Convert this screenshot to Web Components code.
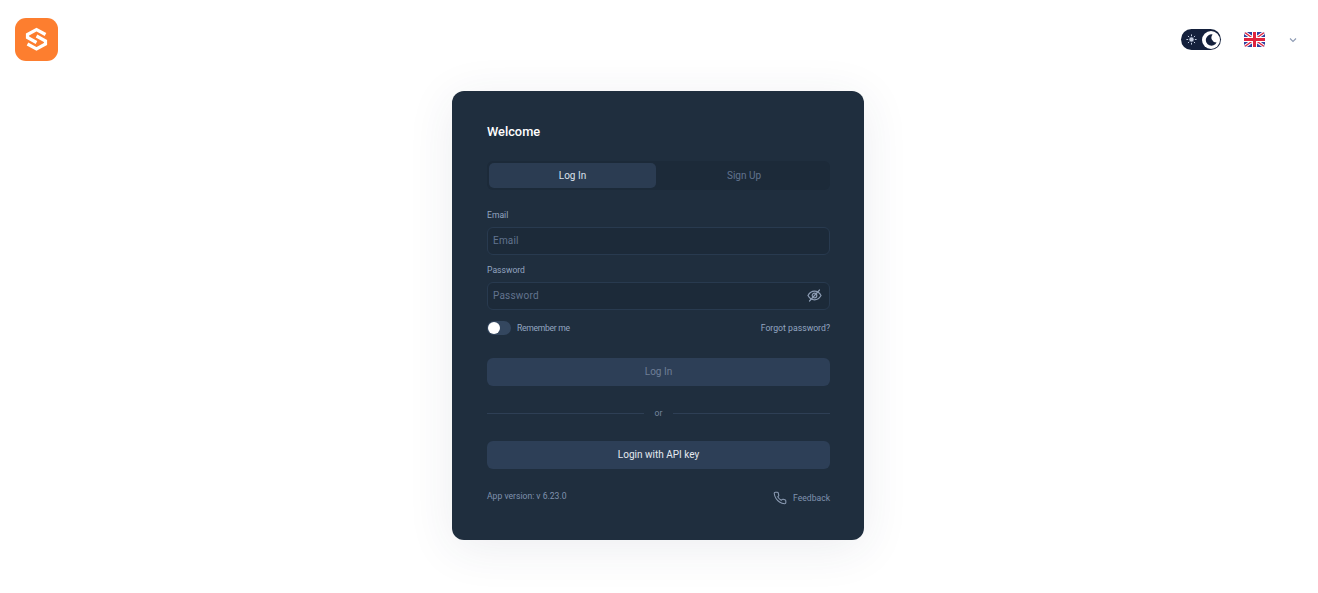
<!DOCTYPE html>
<html lang="en">
<head>
<meta charset="utf-8">
<title>Log In</title>
<style>
  html, body { margin: 0; height: 100%; background: #fff; }
  body { font-family: Roboto, "Liberation Sans", sans-serif; overflow: hidden; }
</style>
</head>
<body>
<login-page></login-page>

<script>
// small helper: every element gets an open shadow root from a string
class Base extends HTMLElement {
  constructor() {
    super();
    this.attachShadow({ mode: "open" });
  }
  connectedCallback() {
    this.shadowRoot.innerHTML = this.markup();
  }
}

class BrandLogo extends Base {
  markup() {
    return `
      <style>
        :host { display: block; width: 43px; height: 43px; border-radius: 11px; background: #fd7e2f; }
        svg { display: block; width: 43px; height: 43px; }
      </style>
      <svg viewBox="0 0 43 43" fill="none" stroke="#fff" stroke-width="3.2" stroke-linejoin="miter">
        <path d="M30.5 16.5 21.5 11.5 12.5 16.5 v3 L21.5 24.5"/>
        <path d="M12.5 26 21.5 31 30.5 26 v-3 L21.5 18"/>
      </svg>`;
  }
}

class ThemeToggle extends Base {
  markup() {
    return `
      <style>
        :host { display: flex; align-items: center; justify-content: space-between; width: 40px; height: 21px; padding: 0 1px 0 5px; box-sizing: border-box; border-radius: 11px; background: #14203c; }
        svg { display: block; }
        .knob { width: 18px; height: 18px; border-radius: 50%; background: #fff; display: flex; align-items: center; justify-content: center; }
      </style>
      <svg width="11" height="11" viewBox="0 0 11 11" stroke="#c3cce0" stroke-width="1" stroke-linecap="round">
        <circle cx="5.5" cy="5.5" r="2.2" fill="#c3cce0" stroke="none"/>
        <path d="M5.5.8v1M5.5 9.2v1M.8 5.5h1M9.2 5.5h1M2.2 2.2l.7.7M8.1 8.1l.7.7M2.2 8.8l.7-.7M8.1 2.9l.7-.7"/>
      </svg>
      <span class="knob">
        <svg width="14" height="14" viewBox="0 0 14 14"><path d="M8.6 1.4a5.7 5.7 0 1 0 4 8.2A5 5 0 0 1 8.6 1.4Z" fill="#14203c"/></svg>
      </span>`;
  }
}

class LangPicker extends Base {
  markup() {
    return `
      <style>
        :host { display: flex; align-items: center; gap: 24px; }
        svg { display: block; }
        .flag { border-radius: 3px; overflow: hidden; width: 21px; height: 15px; }
      </style>
      <div class="flag">
        <svg width="21" height="15" viewBox="0 0 21 15">
          <rect width="21" height="15" fill="#2f3f9e"/>
          <path d="M0 0 21 15M21 0 0 15" stroke="#fff" stroke-width="3.4"/>
          <path d="M0 0 21 15M21 0 0 15" stroke="#e0243f" stroke-width="1.4"/>
          <path d="M10.5 0v15M0 7.5h21" stroke="#fff" stroke-width="5"/>
          <path d="M10.5 0v15M0 7.5h21" stroke="#e0243f" stroke-width="3"/>
        </svg>
      </div>
      <svg width="8" height="6" viewBox="0 0 8 6" fill="none" stroke="#8d9bb4" stroke-width="1.1"><path d="M1 1.5 4 4.5 7 1.5"/></svg>`;
  }
}

class TopBar extends Base {
  markup() {
    return `
      <style>
        :host { display: flex; align-items: flex-start; justify-content: space-between; padding: 18px 21px 0 15px; height: 91px; box-sizing: border-box; flex: none; }
        .right { display: flex; align-items: center; gap: 23px; padding-top: 11px; }
      </style>
      <brand-logo></brand-logo>
      <div class="right">
        <theme-toggle></theme-toggle>
        <lang-picker></lang-picker>
      </div>`;
  }
}

class AuthTabs extends Base {
  markup() {
    return `
      <style>
        :host { display: grid; grid-template-columns: 167px 1fr; column-gap: 4px; height: 29px; padding: 2px; box-sizing: border-box; border-radius: 6px; background: #1c2a39; font-size: 10px; }
        div { display: flex; align-items: center; justify-content: center; border-radius: 5px; color: #62748f; }
        .active { background: #2b3c52; color: #dbe2ec; }
      </style>
      <div class="active">Log In</div>
      <div>Sign Up</div>`;
  }
}

class TextField extends Base {
  markup() {
    const label = this.getAttribute("label");
    const eye = this.hasAttribute("eye");
    return `
      <style>
        :host { display: block; }
        label { display: block; font-size: 8.6px; line-height: 12px; color: #93a5c0; margin-bottom: 6px; }
        .box { display: flex; align-items: center; justify-content: space-between; height: 28px; box-sizing: border-box; padding: 0 7px 1px 5px; border: 1px solid #283a4f; border-radius: 6px; background: #1c2a39; font-size: 10px; letter-spacing: .2px; color: #62748f; }
        svg { display: block; }
      </style>
      <label>${label}</label>
      <div class="box">
        <span>${label}</span>
        ${eye ? `<svg width="15" height="15" viewBox="0 0 15 15" fill="none" stroke="#8c9cb4" stroke-width="1.2" stroke-linecap="round">
          <path d="M1 7.5C2.6 4.6 4.8 3.2 7.5 3.2S12.4 4.6 14 7.5C12.4 10.4 10.2 11.8 7.5 11.8S2.6 10.4 1 7.5Z"/>
          <circle cx="7.5" cy="7.5" r="2.3"/>
          <path d="M2.5 13 12.5 2"/>
        </svg>` : ""}
      </div>`;
  }
}

class ToggleSwitch extends Base {
  markup() {
    return `
      <style>
        :host { display: block; width: 24px; height: 14px; border-radius: 7px; background: #34475f; }
        i { display: block; width: 12px; height: 12px; margin: 1px; border-radius: 50%; background: #fff; }
      </style>
      <i></i>`;
  }
}

class AppButton extends Base {
  markup() {
    const muted = this.hasAttribute("muted");
    return `
      <style>
        :host { display: flex; align-items: center; justify-content: center; height: 28px; box-sizing: border-box; padding-bottom: 1px; border-radius: 6px; background: #2d3f57; font-size: 10px; color: ${muted ? "#6e7e96" : "#e4e9f0"}; }
      </style>
      <slot></slot>`;
  }
}

class OrDivider extends Base {
  markup() {
    return `
      <style>
        :host { display: flex; align-items: center; gap: 11px; font-size: 8.6px; color: #76869e; height: 12px; }
        i { flex: 1; height: 1px; background: #2e3f55; }
      </style>
      <i></i><span>or</span><i></i>`;
  }
}

class LoginCard extends Base {
  markup() {
    return `
      <style>
        :host { display: block; width: 412px; height: 449px; box-sizing: border-box; padding: 32px 34px 0 35px; border-radius: 12px; background: #1f2e3e; box-shadow: 0 8px 48px rgba(40, 60, 90, .09); }
        h1 { margin: 0 0 21px; font-size: 12.8px; line-height: 17px; font-weight: 500; color: #fff; }
        text-field { margin-top: 9px; }
        text-field.first { margin-top: 19px; }
        .row { display: flex; align-items: center; justify-content: space-between; margin-top: 11px; font-size: 8.7px; color: #93a5c0; }
        .row > div { display: flex; align-items: center; gap: 6px; }
        .row > div span { font-size: 8.6px; letter-spacing: -.3px; }
        .login { margin-top: 23px; }
        or-divider { margin-top: 21px; }
        .api { margin-top: 22px; }
        .foot { display: flex; justify-content: space-between; align-items: flex-start; margin-top: 21px; font-size: 8.6px; color: #7f92ae; }
        .foot > span { line-height: 12px; }
        .fb { display: flex; align-items: center; gap: 6px; margin-top: 1px; }
        svg { display: block; }
      </style>
      <h1>Welcome</h1>
      <auth-tabs></auth-tabs>
      <text-field class="first" label="Email"></text-field>
      <text-field label="Password" eye></text-field>
      <div class="row">
        <div><toggle-switch></toggle-switch><span>Remember me</span></div>
        <span>Forgot password?</span>
      </div>
      <app-button class="login" muted>Log In</app-button>
      <or-divider></or-divider>
      <app-button class="api">Login with API key</app-button>
      <div class="foot">
        <span>App version: v 6.23.0</span>
        <div class="fb">
          <svg width="14" height="14" viewBox="0 0 24 24" fill="none" stroke="#8c9cb4" stroke-width="1.8" stroke-linejoin="round">
            <path d="M22 16.92v3a2 2 0 0 1-2.18 2 19.79 19.79 0 0 1-8.63-3.07 19.5 19.5 0 0 1-6-6 19.79 19.79 0 0 1-3.07-8.67A2 2 0 0 1 4.11 2h3a2 2 0 0 1 2 1.72 12.84 12.84 0 0 0 .7 2.81 2 2 0 0 1-.45 2.11L8.09 9.91a16 16 0 0 0 6 6l1.27-1.27a2 2 0 0 1 2.11-.45 12.84 12.84 0 0 0 2.81.7A2 2 0 0 1 22 16.92z"/>
          </svg>
          <span>Feedback</span>
        </div>
      </div>`;
  }
}

class LoginPage extends Base {
  markup() {
    return `
      <style>
        :host { display: flex; flex-direction: column; height: 100vh; color: #fff; }
        main { display: flex; justify-content: center; padding-right: 2px; }
      </style>
      <top-bar></top-bar>
      <main><login-card></login-card></main>`;
  }
}

customElements.define("brand-logo", BrandLogo);
customElements.define("theme-toggle", ThemeToggle);
customElements.define("lang-picker", LangPicker);
customElements.define("top-bar", TopBar);
customElements.define("auth-tabs", AuthTabs);
customElements.define("text-field", TextField);
customElements.define("toggle-switch", ToggleSwitch);
customElements.define("app-button", AppButton);
customElements.define("or-divider", OrDivider);
customElements.define("login-card", LoginCard);
customElements.define("login-page", LoginPage);
</script>
</body>
</html>
